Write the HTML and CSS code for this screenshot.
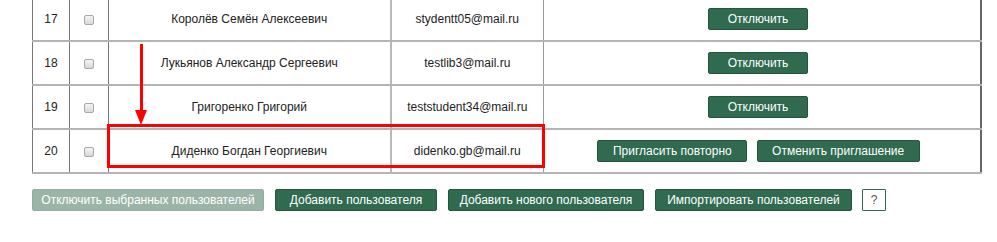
FILE: index.html
```html
<!DOCTYPE html>
<html>
<head>
    <title>Пользователи</title>
    <link rel="stylesheet" href="styles.css">
</head>
<body>
    <div class="wrap">
        <table class="users">
            <colgroup>
                <col class="c-num">
                <col class="c-chk">
                <col class="c-name">
                <col class="c-mail">
                <col class="c-act">
            </colgroup>
            <tr>
                <td>17</td>
                <td><span class="chk"></span></td>
                <td>Королёв Семён Алексеевич</td>
                <td class="mail">stydentt05@mail.ru</td>
                <td class="act"><button class="btn btn-off">Отключить</button></td>
            </tr>
            <tr>
                <td>18</td>
                <td><span class="chk"></span></td>
                <td>Лукьянов Александр Сергеевич</td>
                <td class="mail">testlib3@mail.ru</td>
                <td class="act"><button class="btn btn-off">Отключить</button></td>
            </tr>
            <tr>
                <td>19</td>
                <td><span class="chk"></span></td>
                <td>Григоренко Григорий</td>
                <td class="mail">teststudent34@mail.ru</td>
                <td class="act"><button class="btn btn-off">Отключить</button></td>
            </tr>
            <tr>
                <td>20</td>
                <td><span class="chk"></span></td>
                <td>Диденко Богдан Георгиевич</td>
                <td class="mail">didenko.gb@mail.ru</td>
                <td class="act">
                    <button class="btn btn-again">Пригласить повторно</button>
                    <button class="btn btn-cancel">Отменить приглашение</button>
                </td>
            </tr>
        </table>

        <!-- пометки поверх таблицы -->
        <div class="mark-box"></div>
        <div class="mark-arrow"></div>

        <div class="actions">
            <button class="btn btn-disabled">Отключить выбранных пользователей</button>
            <button class="btn btn-add">Добавить пользователя</button>
            <button class="btn btn-new">Добавить нового пользователя</button>
            <button class="btn btn-import">Импортировать пользователей</button>
            <button class="btn-help">?</button>
        </div>
    </div>
</body>
</html>
```

FILE: styles.css
```css
body {margin: 0; background: #fff; font-family: "Liberation Sans", Arial, sans-serif; font-size: 12px; color: #222;}
.wrap {position: relative; padding: 0 32px;}
.users {border-collapse: collapse; width: 950px; margin-top: -2px; border-right: 2px solid #666;}
.users td {height: 42px; padding: 0; text-align: center; vertical-align: middle; border-left: 1px solid #777; border-bottom: 2px solid #b4b4b4;}
.users td.mail {border-left: 2px solid #b8b8b8;}
.users td.act {border-left: 1px solid #999;}
.c-num {width: 37px;}
.c-chk {width: 39px;}
.c-name {width: 282px;}
.c-mail {width: 153px;}
.chk {display: inline-block; width: 8px; height: 8px; border: 1px solid #a9a9a9; border-radius: 2px; background: linear-gradient(#f4f4f4, #d8d8d8); vertical-align: middle;}
.btn {font-family: "Liberation Sans", Arial, sans-serif; font-size: 12px; color: #fff; background: #306a4f; border: 1px solid #26553f; border-radius: 2px; height: 22px; padding: 0; cursor: pointer; vertical-align: middle;}
.btn-off {width: 100px; margin-left: -8px;}
.btn-again {width: 150px; margin-left: -7px;}
.btn-cancel {width: 163px; margin-left: 6px;}
.actions {display: flex; gap: 11px; margin-top: 15px;}
.btn-disabled {width: 232px; background: #9ab5a8; border-color: #94afa2;}
.btn-add {width: 162px;}
.btn-new {width: 196px;}
.btn-import {width: 197px;}
.btn-help {width: 24px; height: 22px; padding: 0; margin-left: -1px; background: #fff; border: 1px solid #306a4f; border-radius: 1px; font-family: "Liberation Sans", Arial, sans-serif; font-size: 12px; color: #555;}
.mark-box {position: absolute; left: 107px; top: 126px; width: 432px; height: 38px; border: 3px solid #f00;}
.mark-arrow {position: absolute; left: 140px; top: 46px; width: 3px; height: 68px; background: #f00;}
.mark-arrow::after {content: ""; position: absolute; left: -5px; top: 66px; border-left: 6.5px solid transparent; border-right: 6.5px solid transparent; border-top: 15px solid #f00;}
```
